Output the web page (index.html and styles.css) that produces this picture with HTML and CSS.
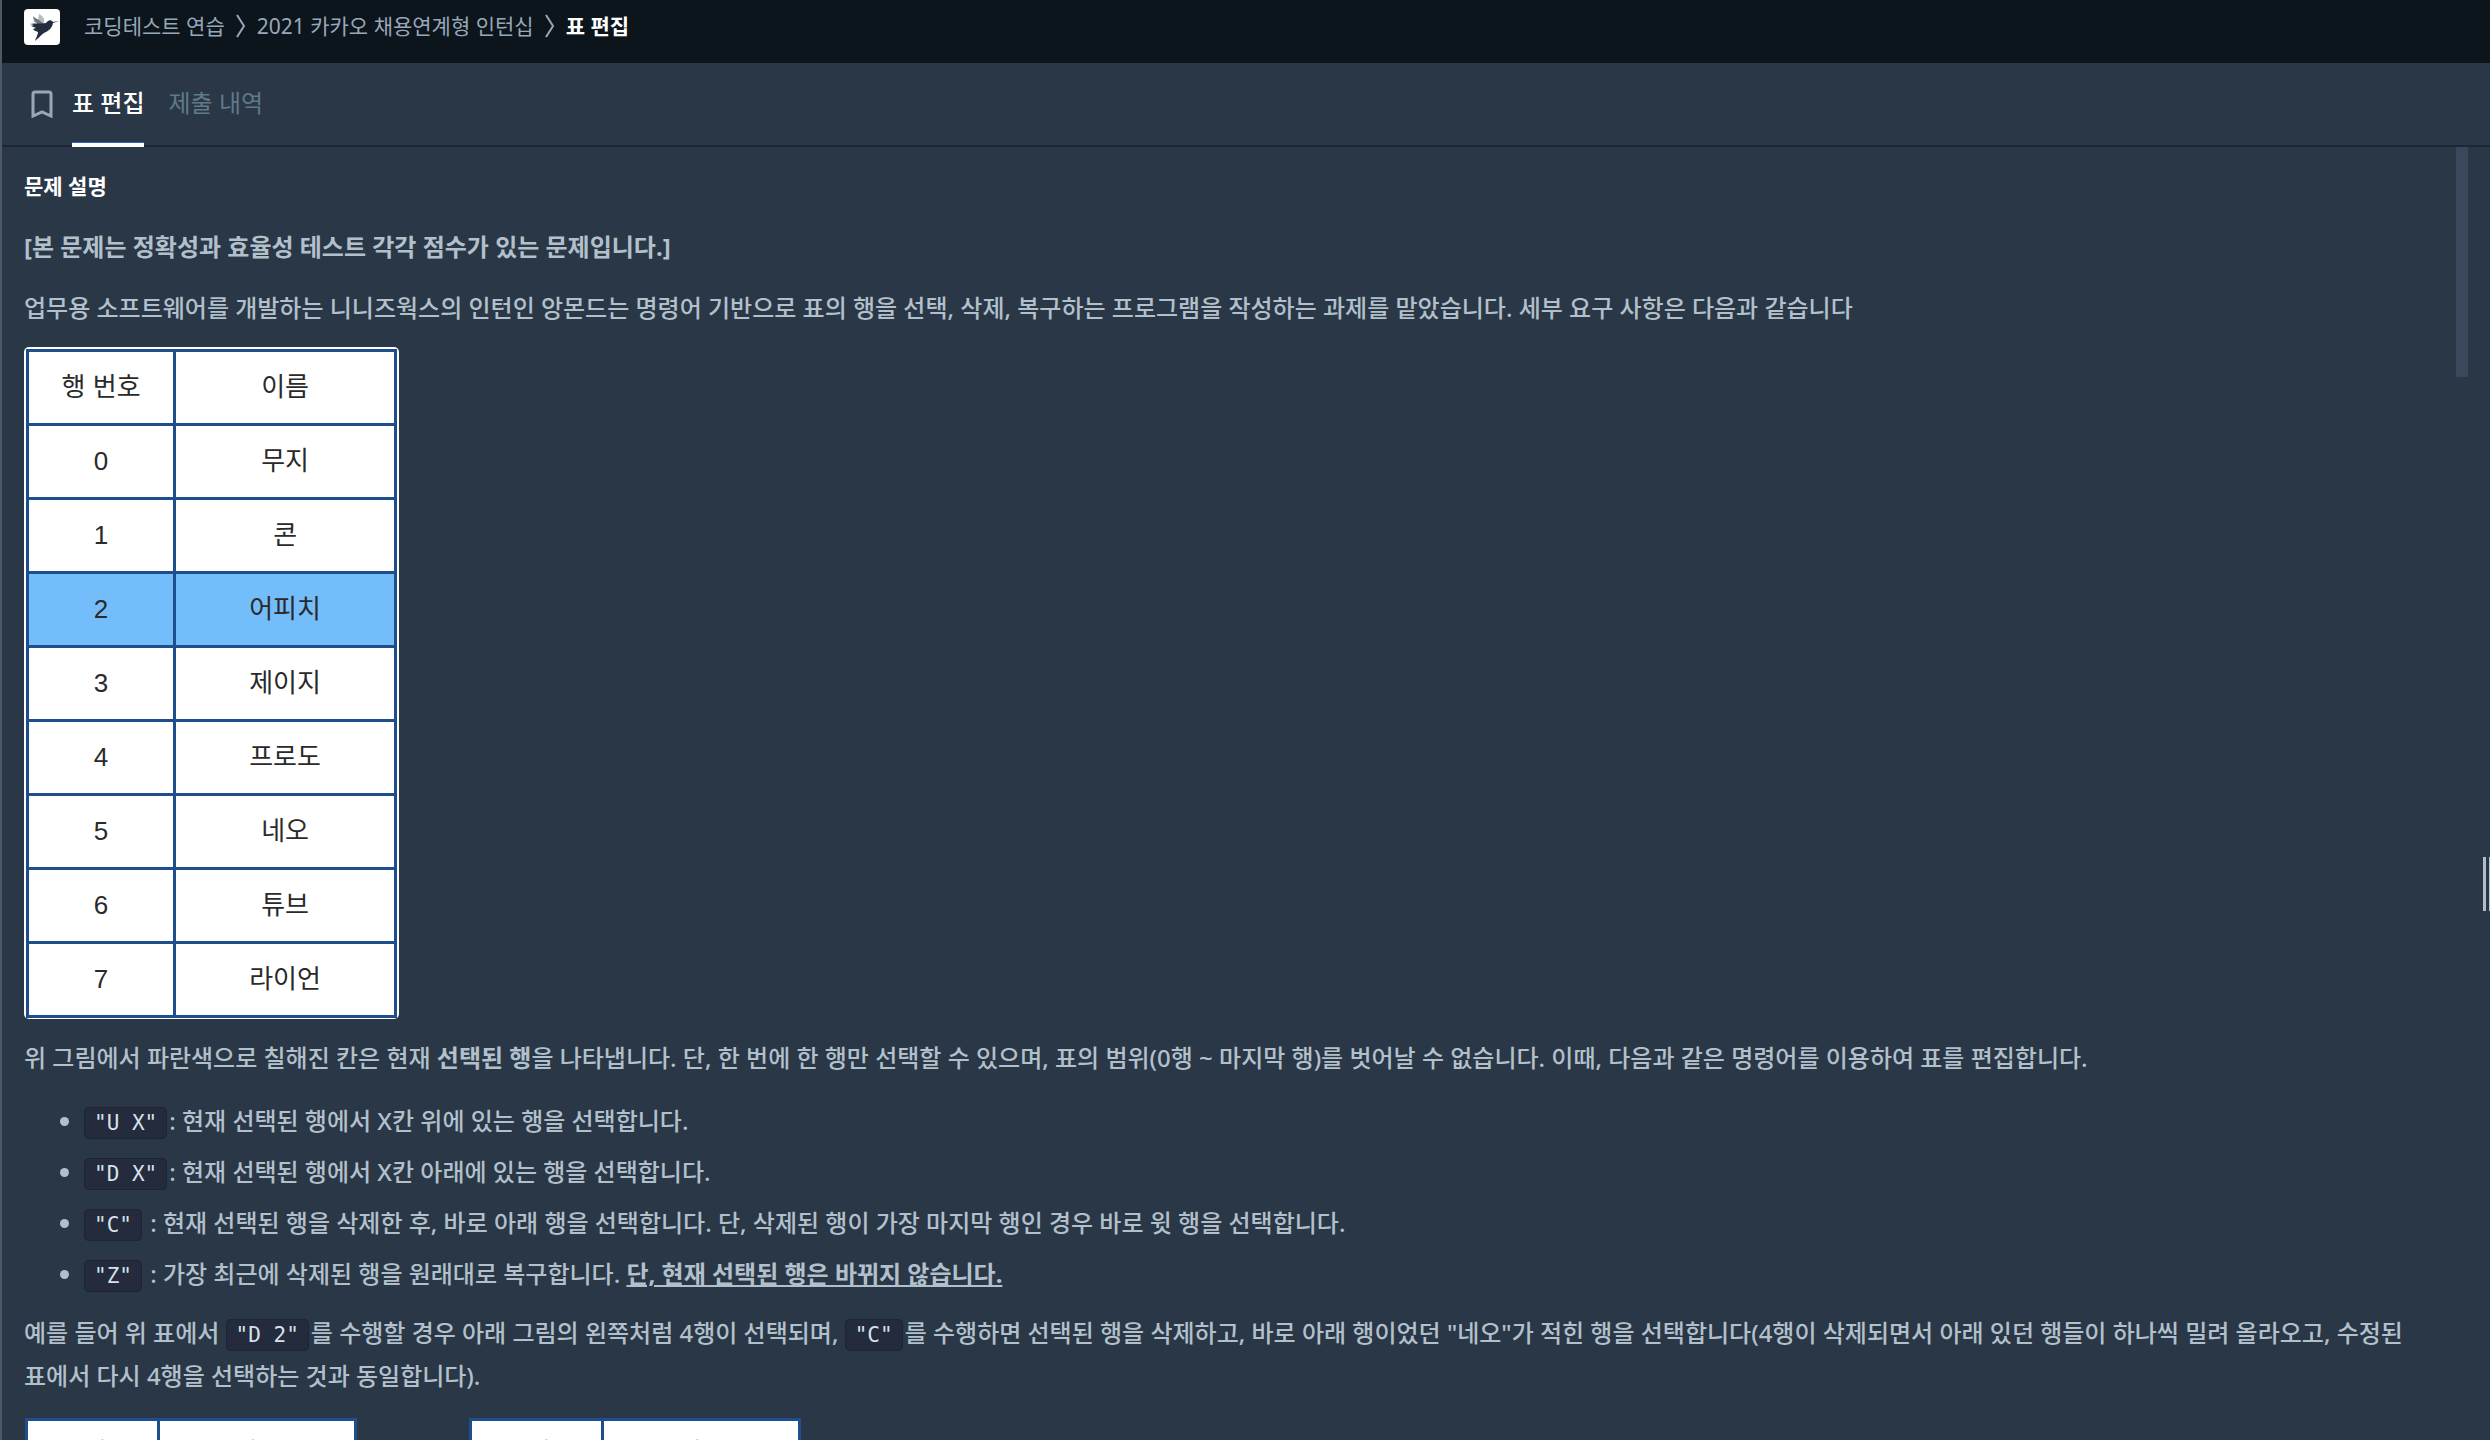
FILE: index.html
```html
<!DOCTYPE html>
<html lang="ko">
<head>
    <meta charset="UTF-8">
    <meta name="viewport" content="width=device-width, initial-scale=1.0">
    <title>표 편집</title>
    <link rel="stylesheet" href="styles.css">
</head>
<body>

<!-- 상단 경로 -->
<header class="header">
    <a class="logo" href="#" aria-label="홈">
        <svg viewBox="0 0 36 36" width="36" height="36">
            <path fill="#9a9c9f" d="M9 7l7 6-1 2-5-2z"/>
            <path fill="#b9bbbd" d="M15 5c4 2 6 5 5 9l-5 1-1-4z"/>
            <path fill="#6e737a" d="M9 8l6 3 5 4-6 1z"/>
            <path fill="#232d40" d="M6 15c5-1 11 0 16-1 2-3 5-4 7-1l6-1-6 2c-1 6-5 8-9 10-3 2-4 4-9 8 1-4 3-6 3-9-1-1-4-1-5-3l3-1-5-2 3-1z"/>
        </svg>
    </a>
    <nav class="breadcrumb">
        <a href="#">코딩테스트 연습</a>
        <svg class="arrow" viewBox="0 0 10 24" width="10" height="24"><path d="M1 1l7 11-7 11"/></svg>
        <a href="#">2021 카카오 채용연계형 인턴십</a>
        <svg class="arrow" viewBox="0 0 10 24" width="10" height="24"><path d="M1 1l7 11-7 11"/></svg>
        <span class="current">표 편집</span>
    </nav>
</header>

<!-- 탭 메뉴 -->
<div class="tabs">
    <button class="bookmark" aria-label="북마크">
        <svg viewBox="0 0 22 28" width="22" height="28"><path d="M2 26V4q0-2 2-2h14q2 0 2 2v22l-9-4z"/></svg>
    </button>
    <a class="tab active" href="#">표 편집</a>
    <a class="tab" href="#">제출 내역</a>
</div>

<!-- 문제 본문 -->
<main class="main">
    <div class="content">
        <h6>문제 설명</h6>
        <p><strong>[본 문제는 정확성과 효율성 테스트 각각 점수가 있는 문제입니다.]</strong></p>
        <p>업무용 소프트웨어를 개발하는 니니즈웍스의 인턴인 앙몬드는 명령어 기반으로 표의 행을 선택, 삭제, 복구하는 프로그램을 작성하는 과제를 맡았습니다. 세부 요구 사항은 다음과 같습니다</p>

        <div class="figure">
            <table class="grid">
                <tr><th>행 번호</th><th>이름</th></tr>
                <tr><td>0</td><td>무지</td></tr>
                <tr><td>1</td><td>콘</td></tr>
                <tr class="selected"><td>2</td><td>어피치</td></tr>
                <tr><td>3</td><td>제이지</td></tr>
                <tr><td>4</td><td>프로도</td></tr>
                <tr><td>5</td><td>네오</td></tr>
                <tr><td>6</td><td>튜브</td></tr>
                <tr><td>7</td><td>라이언</td></tr>
            </table>
        </div>

        <p>위 그림에서 파란색으로 칠해진 칸은 현재 <strong>선택된 행</strong>을 나타냅니다. 단, 한 번에 한 행만 선택할 수 있으며, 표의 범위(0행 ~ 마지막 행)를 벗어날 수 없습니다. 이때, 다음과 같은 명령어를 이용하여 표를 편집합니다.</p>

        <ul>
            <li><code>"U X"</code>: 현재 선택된 행에서 X칸 위에 있는 행을 선택합니다.</li>
            <li><code>"D X"</code>: 현재 선택된 행에서 X칸 아래에 있는 행을 선택합니다.</li>
            <li><code>"C"</code> : 현재 선택된 행을 삭제한 후, 바로 아래 행을 선택합니다. 단, 삭제된 행이 가장 마지막 행인 경우 바로 윗 행을 선택합니다.</li>
            <li><code>"Z"</code> : 가장 최근에 삭제된 행을 원래대로 복구합니다. <strong><u>단, 현재 선택된 행은 바뀌지 않습니다.</u></strong></li>
        </ul>

        <p>예를 들어 위 표에서 <code>"D 2"</code>를 수행할 경우 아래 그림의 왼쪽처럼 4행이 선택되며, <code>"C"</code>를 수행하면 선택된 행을 삭제하고, 바로 아래 행이었던 "네오"가 적힌 행을 선택합니다(4행이 삭제되면서 아래 있던 행들이 하나씩 밀려 올라오고, 수정된 표에서 다시 4행을 선택하는 것과 동일합니다).</p>

        <div class="figure-row">
            <table class="grid small">
                <tr><th>행 번호</th><th>이름</th></tr>
            </table>
            <table class="grid small">
                <tr><th>행 번호</th><th>이름</th></tr>
            </table>
        </div>
    </div>
    <div class="scroll-thumb"></div>
</main>

<div class="gutter"></div>

</body>
</html>
```
FILE: styles.css
```css
* {
    box-sizing: border-box;
}

body {
    font-family: "Noto Sans", "Noto Sans CJK KR", sans-serif;
    font-size: 24px;
    line-height: 43px;
    color: #b2c0cc;
    background: #2a3746;
    display: flex;
    flex-direction: column;
    height: 100vh;
    margin: 0;
    border-left: 2px solid #4e5964;
    overflow: hidden;
    word-break: keep-all;
}

a {
    color: inherit;
    text-decoration: none;
}

/* 상단 경로 */
.header {
    display: flex;
    align-items: flex-start;
    flex-shrink: 0;
    height: 63px;
    padding: 9px 22px;
    background: #0d151c;
}

.logo {
    width: 36px;
    height: 36px;
    background: #fff;
    border-radius: 4px;
}

.logo svg {
    display: block;
}

.breadcrumb {
    display: flex;
    align-items: center;
    gap: 11px;
    margin-left: 24px;
    font-size: 21px;
    line-height: 34px;
    color: #98a8b9;
}

.breadcrumb .current {
    color: #fff;
    font-weight: bold;
}

.arrow path {
    fill: none;
    stroke: #98a8b9;
    stroke-width: 2;
}

/* 탭 메뉴 */
.tabs {
    display: flex;
    flex-shrink: 0;
    height: 84px;
    padding-left: 29px;
    border-bottom: 2px solid #1c2634;
}

.bookmark {
    width: 22px;
    padding: 0;
    margin-right: 19px;
    border: none;
    background: none;
    cursor: pointer;
}

.bookmark svg {
    display: block;
}

.bookmark path {
    fill: none;
    stroke: #98a8b9;
    stroke-width: 3;
}

.tab {
    height: 84px;
    margin-right: 24px;
    line-height: 80px;
    color: #5f7a89;
}

.tab.active {
    color: #fff;
    font-weight: 500;
    border-bottom: 4px solid #fff;
    box-shadow: inset 0 -1px #2f66b8;
}

/* 문제 본문 */
.main {
    position: relative;
    flex: 1;
    min-height: 0;
}

.content {
    height: 100%;
    padding: 23px 48px 0 22px;
    overflow: hidden;
    font-weight: 500;
}

h6 {
    margin: 0 0 23px;
    font-size: 21px;
    line-height: 32px;
    color: #fff;
}

p {
    margin: 0 0 18px;
}

ul {
    margin: 20px 0 16px;
    padding-left: 60px;
}

li {
    margin-bottom: 8px;
}

code {
    margin-right: 2px;
    padding: 3px 9px;
    font-family: "DejaVu Sans Mono", monospace;
    font-size: 21px;
    font-weight: normal;
    line-height: 24px;
    color: #d7e2eb;
    background: #232b3d;
    border: 1px solid #1d2535;
    border-radius: 5px;
}

/* 표 그림 */
.figure {
    width: 375px;
    margin-bottom: 17px;
    padding: 2px 2px 1px;
    background: #fff;
    border-radius: 5px;
}

.grid {
    width: 371px;
    border-collapse: collapse;
    table-layout: fixed;
    font-family: "Liberation Sans", "Noto Sans CJK KR", sans-serif;
    font-size: 26px;
    line-height: 32px;
    color: #2a2a2a;
    background: #fff;
}

.grid th, .grid td {
    height: 74px;
    padding: 0 0 2px;
    border: 3px solid #1f4e8c;
    font-weight: normal;
    text-align: center;
}

.grid th:first-child, .grid td:first-child {
    width: 40%;
}

.grid .selected {
    background: #73bdfb;
}

.figure-row {
    display: flex;
    gap: 112px;
    margin-top: 21px;
    padding-left: 1px;
}

.grid.small {
    width: 332px;
    font-size: 23px;
}

.grid.small th {
    height: 66px;
    padding-bottom: 4px;
}

/* 스크롤바, 크기 조절 막대 */
.scroll-thumb {
    position: absolute;
    top: 0;
    right: 22px;
    width: 12px;
    height: 230px;
    background: #3b485b;
}

.gutter {
    position: absolute;
    top: 857px;
    right: 0;
    width: 7px;
    height: 54px;
    border: solid #b2bfcb;
    border-width: 0 1px 0 3px;
}
```
